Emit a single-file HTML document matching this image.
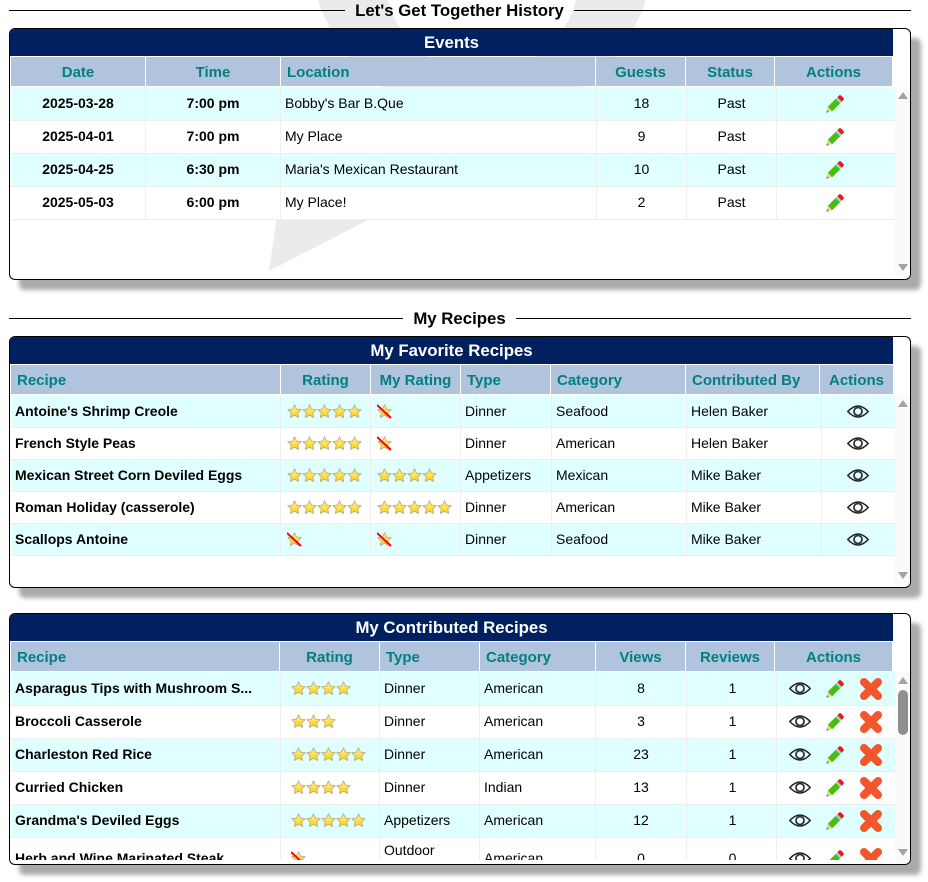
<!DOCTYPE html>
<html><head><meta charset="utf-8"><title>History</title>
<style>
html,body{margin:0;padding:0;background:#fff;width:928px;height:882px;overflow:hidden}
body{position:relative;font-family:"Liberation Sans",sans-serif;font-size:14px;color:#000}
.wm{position:absolute;left:0;top:0;z-index:0}
.ln{position:absolute;height:1px;background:#000;z-index:1}
.st{position:absolute;left:345px;width:229px;text-align:center;font-weight:bold;font-size:16.8px;line-height:20px;z-index:1}
.p{position:absolute;left:9px;width:902px;height:252px;box-sizing:border-box;border:1px solid #000;border-radius:6px;box-shadow:10px 10px 5px #aaa;z-index:1;overflow:hidden}
.cap{position:absolute;left:0;top:0;width:883px;height:27px;background:#002060;color:#fff;font-weight:bold;font-size:16.8px;line-height:28px;text-align:center}
.hd,.bd{position:absolute;left:1px;border-collapse:separate;border-spacing:0;table-layout:fixed}
.hd{top:28px}
.hd th{height:29px;padding:3px 0 0 0;background:#b0c4de;color:#008080;font-size:15px;font-weight:bold;text-align:center;border-right:1px solid #fff;box-sizing:border-box;line-height:26px}
.hd th:last-child{border-right:0}
.hd th.l{text-align:left;padding-left:6px}
.wrap{position:absolute;left:1px;top:58px;width:884px;overflow:hidden;height:191px}
.strip{position:absolute;left:0;top:0;width:884px;height:1px;background:#e0ffff}
.bd{left:0;top:1px}
.bd td{padding:0 4px 2px;box-sizing:border-box;border-right:1px solid #eee;border-bottom:1px solid #eee;text-align:left;white-space:nowrap;overflow:hidden;background:#fff;line-height:16px}
.bd tr:nth-child(odd) td{background:#e0ffff}
.bd td.b{font-weight:bold}
.bd td.c{text-align:center}
.bd td.rv{padding-left:6px}
.r33 td{height:33px}
.r32 td{height:32px}
.bd svg{display:block}
.ic{display:flex;align-items:center}
.pn{position:relative;top:1px}
.sb{position:absolute;left:885px;top:58px;width:15px;height:191px;background:#fafafa}
.s{display:inline-block;width:15px;height:15px;vertical-align:middle}
.stars{display:flex;padding-left:2px}
.y1 .stars,.y1 td>svg{position:relative;top:1px}
.y1 td>svg{left:-1px}
.th{position:absolute;left:888px;top:76px;width:10px;height:45px;background:#8f8f8f;border-radius:5px}
.up,.dn{position:absolute;left:3px;width:0;height:0;border-left:5px solid transparent;border-right:5px solid transparent}
.up{border-bottom:7px solid #a3a3a3}
.dn{border-top:7px solid #a3a3a3}
</style></head><body>
<svg width="0" height="0" style="position:absolute">
<defs>
<linearGradient id="g" x1="0" y1="0" x2="0" y2="1"><stop offset="0" stop-color="#fff2a8"/><stop offset="1" stop-color="#ffd000"/></linearGradient>
<symbol id="star" viewBox="0 0 15 15"><path d="M7.500 .8L9.500 5.050 14.160 5.640 10.730 8.850 11.610 13.460 7.500 11.200 3.390 13.460 4.270 8.850 .84 5.640 5.500 5.050Z" fill="url(#g)" stroke="#b9ae80" stroke-width=".9" stroke-linejoin="round"/></symbol>
<symbol id="no" viewBox="0 0 15 15"><use href="#star" width="15" height="15"/><path d="M0 1L14 14" stroke="#f00" stroke-width="2"/></symbol>
<symbol id="pen" viewBox="0 0 18 18"><path d="M1.800 11.800L9.800 3.800 14.200 8.200 6.200 16.200Z" fill="#4cbb12"/><path d="M9.800 3.800L11.300 2.300 15.700 6.700 14.200 8.200Z" fill="#8fd8e0"/><path d="M11.300 2.300L13.300 .3Q14.200 -.2 15.200 .6L17.300 2.700Q18.200 3.800 17.700 4.700L15.700 6.700Z" fill="#f01818"/><path d="M.3 17.700L1.800 11.800 6.200 16.200Z" fill="#e6d77a"/><path d="M.3 17.700L1 15.200 2.800 17Z" fill="#4a6fd0"/></symbol>
<symbol id="eye" viewBox="0 0 22 15"><path d="M.8 7.500Q11-3.500 21.200 7.500 11 18.500 .8 7.500Z" fill="none" stroke="#222" stroke-width="1.500"/><circle cx="11" cy="7.500" r="4" fill="none" stroke="#333" stroke-width="1.800"/></symbol>
<symbol id="x" viewBox="0 0 24 24"><path d="M5 5L19 19M19 5L5 19" stroke="#f3562d" stroke-width="8" stroke-linecap="round"/></symbol>
</defs></svg>

<svg class="wm" width="928" height="300"><path fill-rule="evenodd" fill="#ebebeb" d="M309.400 -54a172.600 172.600 0 1 0 345.200 0a172.600 172.600 0 1 0-345.200 0ZM385 -24a97 97 0 1 0 194 0a97 97 0 1 0-194 0Z"/><path fill="#ebebeb" d="M278 210L269 271 370 219Z"/></svg>

<div class="ln" style="left:9px;top:10px;width:336px"></div>
<div class="ln" style="left:574px;top:10px;width:337px"></div>
<div class="st" style="top:1px">Let's Get Together History</div>

<div class="p" style="top:28px">
<div class="cap">Events</div>
<table class="hd" style="width:881px"><colgroup><col style="width:135px"><col style="width:135px"><col style="width:315px"><col style="width:90px"><col style="width:89px"><col style="width:117px"></colgroup><tr><th>Date</th><th>Time</th><th class="l">Location</th><th>Guests</th><th>Status</th><th>Actions</th></tr></table>
<div class="wrap"><div class="strip"></div><table class="bd r33" style="width:885px"><colgroup><col style="width:135px"><col style="width:135px"><col style="width:316px"><col style="width:90px"><col style="width:90px"><col style="width:119px"></colgroup>
<tr><td class="b c">2025-03-28</td><td class="b c">7:00 pm</td><td>Bobby's Bar B.Que</td><td class="c">18</td><td class="c">Past</td><td><svg class="pn" width="18" height="18" style="margin:0 auto;left:-1px"><use href="#pen"/></svg></td></tr>
<tr><td class="b c">2025-04-01</td><td class="b c">7:00 pm</td><td>My Place</td><td class="c">9</td><td class="c">Past</td><td><svg class="pn" width="18" height="18" style="margin:0 auto;left:-1px"><use href="#pen"/></svg></td></tr>
<tr><td class="b c">2025-04-25</td><td class="b c">6:30 pm</td><td>Maria's Mexican Restaurant</td><td class="c">10</td><td class="c">Past</td><td><svg class="pn" width="18" height="18" style="margin:0 auto;left:-1px"><use href="#pen"/></svg></td></tr>
<tr><td class="b c">2025-05-03</td><td class="b c">6:00 pm</td><td>My Place!</td><td class="c">2</td><td class="c">Past</td><td><svg class="pn" width="18" height="18" style="margin:0 auto;left:-1px"><use href="#pen"/></svg></td></tr>
</table></div>
<div class="sb"><div class="up" style="top:5px"></div><div class="dn" style="top:177px"></div></div>
</div>

<div class="ln" style="left:9px;top:318px;width:394px"></div>
<div class="ln" style="left:516px;top:318px;width:395px"></div>
<div class="st" style="top:309px;left:403px;width:113px">My Recipes</div>

<div class="p" style="top:336px">
<div class="cap">My Favorite Recipes</div>
<table class="hd" style="width:882px"><colgroup><col style="width:270px"><col style="width:90px"><col style="width:90px"><col style="width:90px"><col style="width:135px"><col style="width:134px"><col style="width:73px"></colgroup><tr><th class="l">Recipe</th><th>Rating</th><th>My Rating</th><th class="l">Type</th><th class="l">Category</th><th class="l">Contributed By</th><th>Actions</th></tr></table>
<div class="wrap"><div class="strip"></div><table class="bd r32 y1" style="width:885px"><colgroup><col style="width:270px"><col style="width:90px"><col style="width:90px"><col style="width:91px"><col style="width:135px"><col style="width:135px"><col style="width:74px"></colgroup>
<tr><td class="b">Antoine's Shrimp Creole</td><td><div class="stars"><svg class="s"><use href="#star"/></svg><svg class="s"><use href="#star"/></svg><svg class="s"><use href="#star"/></svg><svg class="s"><use href="#star"/></svg><svg class="s"><use href="#star"/></svg></div></td><td><div class="stars"><svg class="s"><use href="#no"/></svg></div></td><td>Dinner</td><td>Seafood</td><td>Helen Baker</td><td><svg width="22" height="15" style="margin:0 auto"><use href="#eye"/></svg></td></tr>
<tr><td class="b">French Style Peas</td><td><div class="stars"><svg class="s"><use href="#star"/></svg><svg class="s"><use href="#star"/></svg><svg class="s"><use href="#star"/></svg><svg class="s"><use href="#star"/></svg><svg class="s"><use href="#star"/></svg></div></td><td><div class="stars"><svg class="s"><use href="#no"/></svg></div></td><td>Dinner</td><td>American</td><td>Helen Baker</td><td><svg width="22" height="15" style="margin:0 auto"><use href="#eye"/></svg></td></tr>
<tr><td class="b">Mexican Street Corn Deviled Eggs</td><td><div class="stars"><svg class="s"><use href="#star"/></svg><svg class="s"><use href="#star"/></svg><svg class="s"><use href="#star"/></svg><svg class="s"><use href="#star"/></svg><svg class="s"><use href="#star"/></svg></div></td><td><div class="stars"><svg class="s"><use href="#star"/></svg><svg class="s"><use href="#star"/></svg><svg class="s"><use href="#star"/></svg><svg class="s"><use href="#star"/></svg></div></td><td>Appetizers</td><td>Mexican</td><td>Mike Baker</td><td><svg width="22" height="15" style="margin:0 auto"><use href="#eye"/></svg></td></tr>
<tr><td class="b">Roman Holiday (casserole)</td><td><div class="stars"><svg class="s"><use href="#star"/></svg><svg class="s"><use href="#star"/></svg><svg class="s"><use href="#star"/></svg><svg class="s"><use href="#star"/></svg><svg class="s"><use href="#star"/></svg></div></td><td><div class="stars"><svg class="s"><use href="#star"/></svg><svg class="s"><use href="#star"/></svg><svg class="s"><use href="#star"/></svg><svg class="s"><use href="#star"/></svg><svg class="s"><use href="#star"/></svg></div></td><td>Dinner</td><td>American</td><td>Mike Baker</td><td><svg width="22" height="15" style="margin:0 auto"><use href="#eye"/></svg></td></tr>
<tr><td class="b">Scallops Antoine</td><td><div class="stars"><svg class="s"><use href="#no"/></svg></div></td><td><div class="stars"><svg class="s"><use href="#no"/></svg></div></td><td>Dinner</td><td>Seafood</td><td>Mike Baker</td><td><svg width="22" height="15" style="margin:0 auto"><use href="#eye"/></svg></td></tr>
</table></div>
<div class="sb"><div class="up" style="top:5px"></div><div class="dn" style="top:177px"></div></div>
</div>

<div class="p" style="top:613px">
<div class="cap">My Contributed Recipes</div>
<table class="hd" style="width:881px"><colgroup><col style="width:269px"><col style="width:100px"><col style="width:100px"><col style="width:116px"><col style="width:90px"><col style="width:89px"><col style="width:117px"></colgroup><tr><th class="l">Recipe</th><th>Rating</th><th class="l">Type</th><th class="l">Category</th><th>Views</th><th>Reviews</th><th>Actions</th></tr></table>
<div class="wrap" style="height:188px"><div class="strip"></div><table class="bd r33" style="width:885px"><colgroup><col style="width:270px"><col style="width:99px"><col style="width:100px"><col style="width:116px"><col style="width:91px"><col style="width:90px"><col style="width:119px"></colgroup>
<tr><td class="b">Asparagus Tips with Mushroom S...</td><td><div class="stars" style="padding-left:6px"><svg class="s"><use href="#star"/></svg><svg class="s"><use href="#star"/></svg><svg class="s"><use href="#star"/></svg><svg class="s"><use href="#star"/></svg></div></td><td>Dinner</td><td>American</td><td class="c">8</td><td class="c rv">1</td><td><div class="ic"><svg width="22" height="15" style="margin-left:8px"><use href="#eye"/></svg><svg class="pn" width="18" height="18" style="margin-left:15px"><use href="#pen"/></svg><svg class="pn" width="24" height="24" style="margin-left:15px"><use href="#x"/></svg></div></td></tr>
<tr><td class="b">Broccoli Casserole</td><td><div class="stars" style="padding-left:6px"><svg class="s"><use href="#star"/></svg><svg class="s"><use href="#star"/></svg><svg class="s"><use href="#star"/></svg></div></td><td>Dinner</td><td>American</td><td class="c">3</td><td class="c rv">1</td><td><div class="ic"><svg width="22" height="15" style="margin-left:8px"><use href="#eye"/></svg><svg class="pn" width="18" height="18" style="margin-left:15px"><use href="#pen"/></svg><svg class="pn" width="24" height="24" style="margin-left:15px"><use href="#x"/></svg></div></td></tr>
<tr><td class="b">Charleston Red Rice</td><td><div class="stars" style="padding-left:6px"><svg class="s"><use href="#star"/></svg><svg class="s"><use href="#star"/></svg><svg class="s"><use href="#star"/></svg><svg class="s"><use href="#star"/></svg><svg class="s"><use href="#star"/></svg></div></td><td>Dinner</td><td>American</td><td class="c">23</td><td class="c rv">1</td><td><div class="ic"><svg width="22" height="15" style="margin-left:8px"><use href="#eye"/></svg><svg class="pn" width="18" height="18" style="margin-left:15px"><use href="#pen"/></svg><svg class="pn" width="24" height="24" style="margin-left:15px"><use href="#x"/></svg></div></td></tr>
<tr><td class="b">Curried Chicken</td><td><div class="stars" style="padding-left:6px"><svg class="s"><use href="#star"/></svg><svg class="s"><use href="#star"/></svg><svg class="s"><use href="#star"/></svg><svg class="s"><use href="#star"/></svg></div></td><td>Dinner</td><td>Indian</td><td class="c">13</td><td class="c rv">1</td><td><div class="ic"><svg width="22" height="15" style="margin-left:8px"><use href="#eye"/></svg><svg class="pn" width="18" height="18" style="margin-left:15px"><use href="#pen"/></svg><svg class="pn" width="24" height="24" style="margin-left:15px"><use href="#x"/></svg></div></td></tr>
<tr><td class="b">Grandma's Deviled Eggs</td><td><div class="stars" style="padding-left:6px"><svg class="s"><use href="#star"/></svg><svg class="s"><use href="#star"/></svg><svg class="s"><use href="#star"/></svg><svg class="s"><use href="#star"/></svg><svg class="s"><use href="#star"/></svg></div></td><td>Appetizers</td><td>American</td><td class="c">12</td><td class="c rv">1</td><td><div class="ic"><svg width="22" height="15" style="margin-left:8px"><use href="#eye"/></svg><svg class="pn" width="18" height="18" style="margin-left:15px"><use href="#pen"/></svg><svg class="pn" width="24" height="24" style="margin-left:15px"><use href="#x"/></svg></div></td></tr>
<tr><td class="b" style="height:43px">Herb and Wine Marinated Steak</td><td style="height:43px"><div class="stars" style="padding-left:6px"><svg class="s"><use href="#no"/></svg></div></td><td style="height:43px;white-space:normal">Outdoor Grilling</td><td style="height:43px">American</td><td class="c" style="height:43px">0</td><td class="c rv" style="height:43px">0</td><td style="height:43px"><div class="ic"><svg width="22" height="15" style="margin-left:8px"><use href="#eye"/></svg><svg class="pn" width="18" height="18" style="margin-left:15px"><use href="#pen"/></svg><svg class="pn" width="24" height="24" style="margin-left:15px"><use href="#x"/></svg></div></td></tr>
</table></div>
<div class="sb" style="height:192px"><div class="up" style="top:5px"></div><div class="dn" style="top:177px"></div></div>
<div class="th"></div>
</div>
</body></html>
